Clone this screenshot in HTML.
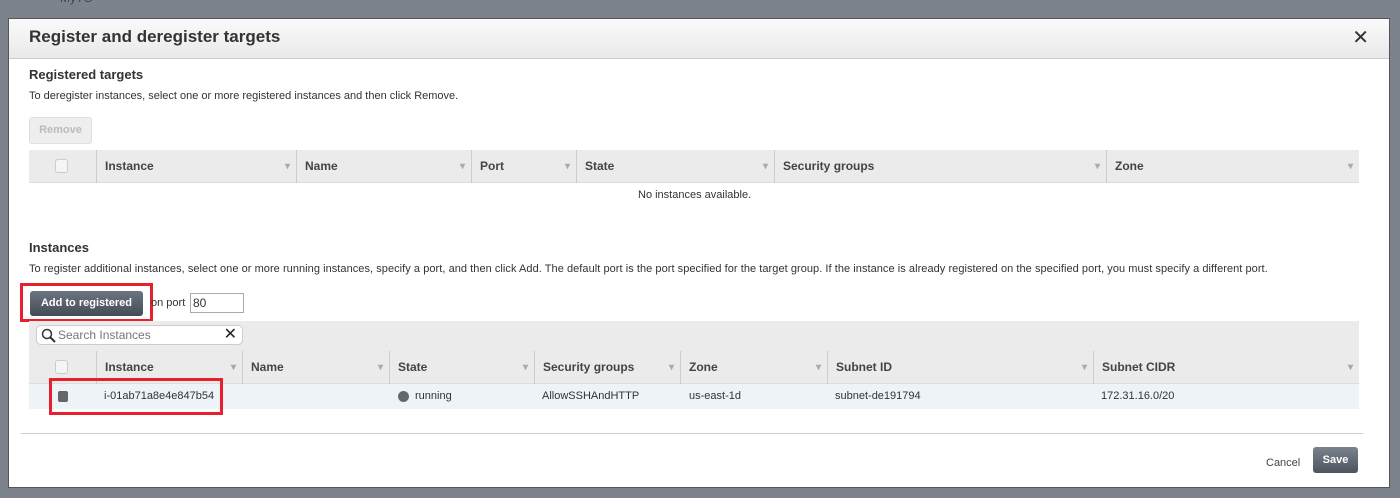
<!DOCTYPE html><html><head><style>
*{box-sizing:border-box}body{margin:0;width:1400px;height:498px;background:#7d838c;font-family:"Liberation Sans",sans-serif;position:relative;overflow:hidden;font-size:12px;color:#333}
.a{position:absolute}
.modal{left:8px;top:18px;width:1382px;height:470px;background:#fff;border:1px solid #555}
.title{left:0;top:0;width:100%;height:40px;background:linear-gradient(#fafafa,#e9e9e9);border-bottom:1px solid #ccc}
.hdr{background:#ebebeb;border-bottom:1px solid #ddd;height:33px}
.th{position:absolute;top:0;height:33px;line-height:33px;font-weight:bold;font-size:12px;color:#444;border-left:1px solid #ccc;padding-left:8px;white-space:nowrap}
.th:after{content:"▾";position:absolute;right:6px;color:#aaa;font-size:10px}
.cb{position:absolute;width:13px;height:14px;border:1px solid #ccc;border-radius:3px;background:#f5f5f5}
.red{position:absolute;border:3px solid #e8202e}
</style></head><body>
<div class="a" style="left:60px;top:-9px;color:#444;font-size:12px">MyTG</div>
<div class="a modal">
<div class="a title"><div class="a" style="left:20px;top:8px;font-size:17px;font-weight:bold;color:#333">Register and deregister targets</div><div class="a" style="right:20px;top:6px;font-size:20px">✕</div></div>
<div class="a" style="left:20px;top:48px;font-size:13px;font-weight:bold">Registered targets</div>
<div class="a" style="left:20px;top:71px;font-size:11px">To deregister instances, select one or more registered instances and then click Remove.</div>
<div class="a" style="left:20px;top:98px;width:63px;height:27px;background:#eee;border:1px solid #e0e0e0;border-radius:3px;color:#bbb;font-size:11px;font-weight:bold;text-align:center;line-height:25px">Remove</div>
<div class="a hdr" style="left:20px;top:131px;width:1330px">
<div class="cb" style="left:26px;top:9px"></div>
<div class="th" style="left:67px;width:200px">Instance</div><div class="th" style="left:267px;width:175px">Name</div><div class="th" style="left:442px;width:105px">Port</div><div class="th" style="left:547px;width:198px">State</div><div class="th" style="left:745px;width:332px">Security groups</div><div class="th" style="left:1077px;width:253px">Zone</div></div>
<div class="a" style="left:629px;top:170px;font-size:11px">No instances available.</div>
<div class="a" style="left:20px;top:221px;font-size:13px;font-weight:bold">Instances</div>
<div class="a" style="left:20px;top:244px;font-size:11px;white-space:nowrap;letter-spacing:0.05px">To register additional instances, select one or more running instances, specify a port, and then click Add. The default port is the port specified for the target group. If the instance is already registered on the specified port, you must specify a different port.</div>
<div class="a" style="left:21px;top:272px;width:113px;height:25px;background:linear-gradient(#6d7582,#444b55);border-radius:3px;color:#fff;font-weight:bold;font-size:11px;text-align:center;line-height:25px;white-space:nowrap">Add to registered</div>
<div class="red" style="left:11px;top:264px;width:133px;height:39px"></div>
<div class="a" style="left:142px;top:278px;font-size:11px">on port</div>
<div class="a" style="left:181px;top:274px;width:54px;height:20px;border:1px solid #aaa;font-size:12px;padding:2px">80</div>
<div class="a" style="left:20px;top:302px;width:1330px;height:30px;background:#ebebeb"></div>
<div class="a" style="left:27px;top:306px;width:207px;height:20px;background:#fff;border:1px solid #ccc;border-radius:5px;font-size:12px;color:#777;line-height:18px;padding-left:21px">Search Instances
<svg class="a" style="left:4px;top:2px" width="15" height="15"><circle cx="6" cy="6" r="4.5" fill="none" stroke="#333" stroke-width="1.5"/><path d="M9 9l5 5" stroke="#333" stroke-width="2"/></svg>
<span class="a" style="right:5px;top:0;color:#222;font-size:16px">✕</span></div>
<div class="a hdr" style="left:20px;top:332px;width:1330px">
<div class="cb" style="left:26px;top:9px"></div>
<div class="th" style="left:67px;width:146px">Instance</div><div class="th" style="left:213px;width:147px">Name</div><div class="th" style="left:360px;width:145px">State</div><div class="th" style="left:505px;width:146px">Security groups</div><div class="th" style="left:651px;width:147px">Zone</div><div class="th" style="left:798px;width:266px">Subnet ID</div><div class="th" style="left:1064px;width:266px">Subnet CIDR</div></div>
<div class="a" style="left:20px;top:365px;width:1330px;height:25px;background:#eef3f8;font-size:11px;line-height:25px">
<div class="a" style="left:29px;top:7px;width:10px;height:11px;background:#666;border-radius:2px"></div>
<span class="a" style="left:75px">i-01ab71a8e4e847b54</span>
<span class="a" style="left:369px;top:7px;width:11px;height:11px;border-radius:50%;background:#666"></span>
<span class="a" style="left:386px">running</span><span class="a" style="left:513px">AllowSSHAndHTTP</span><span class="a" style="left:660px">us-east-1d</span><span class="a" style="left:806px">subnet-de191794</span><span class="a" style="left:1072px">172.31.16.0/20</span></div>
<div class="red" style="left:40px;top:359px;width:174px;height:37px"></div>
<div class="a" style="left:12px;top:414px;width:1342px;height:1px;background:#ccc"></div>
<div class="a" style="left:1257px;top:438px;font-size:11px;color:#444">Cancel</div>
<div class="a" style="left:1304px;top:428px;width:45px;height:26px;background:linear-gradient(#7a828e,#4d545e);border-radius:3px;color:#fff;font-weight:bold;font-size:11px;text-align:center;line-height:26px">Save</div>
</div>
</body></html>
